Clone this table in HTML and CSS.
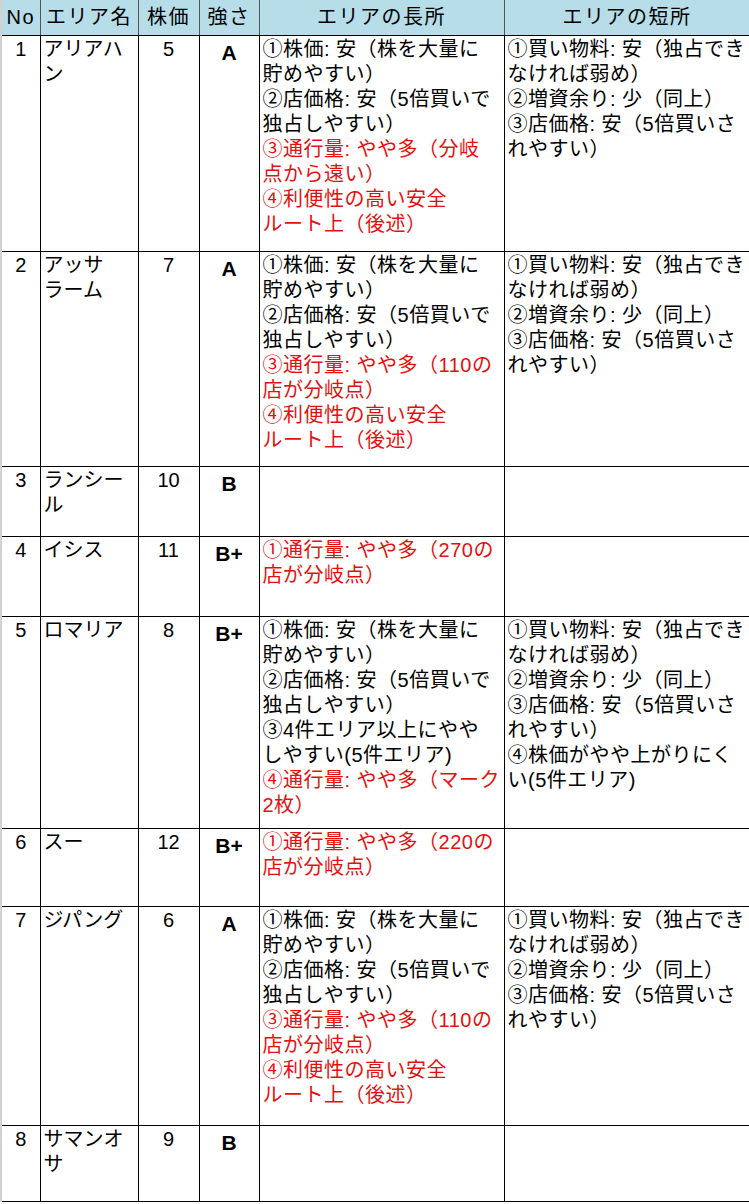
FILE: index.html
```html
<!DOCTYPE html>
<html lang="ja">
<head>
<meta charset="utf-8">
<title>エリア比較</title>
<link rel="stylesheet" href="styles.css">
</head>
<body>
<table class="areas">
  <colgroup>
    <col class="c-no"><col class="c-name"><col class="c-price"><col class="c-rank"><col class="c-good"><col class="c-bad">
  </colgroup>
  <thead>
    <tr class="head">
      <th>No</th><th>エリア名</th><th>株価</th><th>強さ</th><th>エリアの長所</th><th>エリアの短所</th>
    </tr>
  </thead>
  <tbody>
    <tr class="r1">
      <td class="no">1</td>
      <td class="name">アリアハ<br>ン</td>
      <td class="price">5</td>
      <td class="rank">A</td>
      <td class="txt">①株価: 安（株を大量に<br>貯めやすい）<br>②店価格: 安（5倍買いで<br>独占しやすい）<br><span class="red">③通行量: やや多（分岐<br>点から遠い）<br>④利便性の高い安全<br>ルート上（後述）</span></td>
      <td class="txt">①買い物料: 安（独占でき<br>なければ弱め）<br>②増資余り: 少（同上）<br>③店価格: 安（5倍買いさ<br>れやすい）</td>
    </tr>
    <tr class="r2">
      <td class="no">2</td>
      <td class="name">アッサ<br>ラーム</td>
      <td class="price">7</td>
      <td class="rank">A</td>
      <td class="txt">①株価: 安（株を大量に<br>貯めやすい）<br>②店価格: 安（5倍買いで<br>独占しやすい）<br><span class="red">③通行量: やや多（110の<br>店が分岐点）<br>④利便性の高い安全<br>ルート上（後述）</span></td>
      <td class="txt">①買い物料: 安（独占でき<br>なければ弱め）<br>②増資余り: 少（同上）<br>③店価格: 安（5倍買いさ<br>れやすい）</td>
    </tr>
    <tr class="r3">
      <td class="no">3</td>
      <td class="name">ランシー<br>ル</td>
      <td class="price">10</td>
      <td class="rank">B</td>
      <td class="txt"></td>
      <td class="txt"></td>
    </tr>
    <tr class="r4">
      <td class="no">4</td>
      <td class="name">イシス</td>
      <td class="price">11</td>
      <td class="rank">B+</td>
      <td class="txt"><span class="red">①通行量: やや多（270の<br>店が分岐点）</span></td>
      <td class="txt"></td>
    </tr>
    <tr class="r5">
      <td class="no">5</td>
      <td class="name">ロマリア</td>
      <td class="price">8</td>
      <td class="rank">B+</td>
      <td class="txt">①株価: 安（株を大量に<br>貯めやすい）<br>②店価格: 安（5倍買いで<br>独占しやすい）<br>③4件エリア以上にやや<br>しやすい(5件エリア)<br><span class="red">④通行量: やや多（マーク<br>2枚）</span></td>
      <td class="txt">①買い物料: 安（独占でき<br>なければ弱め）<br>②増資余り: 少（同上）<br>③店価格: 安（5倍買いさ<br>れやすい）<br>④株価がやや上がりにく<br>い(5件エリア)</td>
    </tr>
    <tr class="r6">
      <td class="no">6</td>
      <td class="name">スー</td>
      <td class="price">12</td>
      <td class="rank">B+</td>
      <td class="txt"><span class="red">①通行量: やや多（220の<br>店が分岐点）</span></td>
      <td class="txt"></td>
    </tr>
    <tr class="r7">
      <td class="no">7</td>
      <td class="name">ジパング</td>
      <td class="price">6</td>
      <td class="rank">A</td>
      <td class="txt">①株価: 安（株を大量に<br>貯めやすい）<br>②店価格: 安（5倍買いで<br>独占しやすい）<br><span class="red">③通行量: やや多（110の<br>店が分岐点）<br>④利便性の高い安全<br>ルート上（後述）</span></td>
      <td class="txt">①買い物料: 安（独占でき<br>なければ弱め）<br>②増資余り: 少（同上）<br>③店価格: 安（5倍買いさ<br>れやすい）</td>
    </tr>
    <tr class="r8">
      <td class="no">8</td>
      <td class="name">サマンオ<br>サ</td>
      <td class="price">9</td>
      <td class="rank">B</td>
      <td class="txt"></td>
      <td class="txt"></td>
    </tr>
  </tbody>
</table>
</body>
</html>
```

FILE: styles.css
```css
html, body {
  margin: 0;
  padding: 0;
  background: #ffffff;
}

.areas {
  border-collapse: collapse;
  table-layout: fixed;
  width: 749px;
  font-family: "Liberation Sans", "Noto Sans CJK JP", sans-serif;
  font-size: 20px;
  line-height: 25px;
  color: #000;
}

.c-no { width: 39px; }
.c-name { width: 98px; }
.c-price { width: 61px; }
.c-rank { width: 60px; }
.c-good { width: 245px; }
.c-bad { width: 246px; }

.areas th,
.areas td {
  border: 1px solid #000;
  padding: 1px 3px 0;
  vertical-align: top;
  white-space: nowrap;
  overflow: hidden;
}

.areas tr > :first-child {
  border-left: 2px solid #d2d2d2;
}

.areas thead th {
  border-top: none;
  border-left-color: #555;
  border-right-color: #555;
  background: #b7dde8;
  font-weight: normal;
  text-align: center;
  vertical-align: middle;
  height: 35px;
  padding: 0 1px;
  letter-spacing: 1.5px;
}

.areas .txt { letter-spacing: 0.5px; }

.areas .no { text-align: center; }
.areas .price { text-align: center; }
.areas .rank {
  text-align: center;
  font-weight: bold;
  font-size: 21px;
  padding-top: 4px;
}
.areas .name { padding-left: 3px; }

.red { color: #e41010; }

.r1 { height: 216px; }
.r2 { height: 215px; }
.r3 { height: 70px; }
.r4 { height: 80px; }
.r5 { height: 212px; }
.r6 { height: 78px; }
.r7 { height: 219px; }
.r8 { height: 76px; }
```
